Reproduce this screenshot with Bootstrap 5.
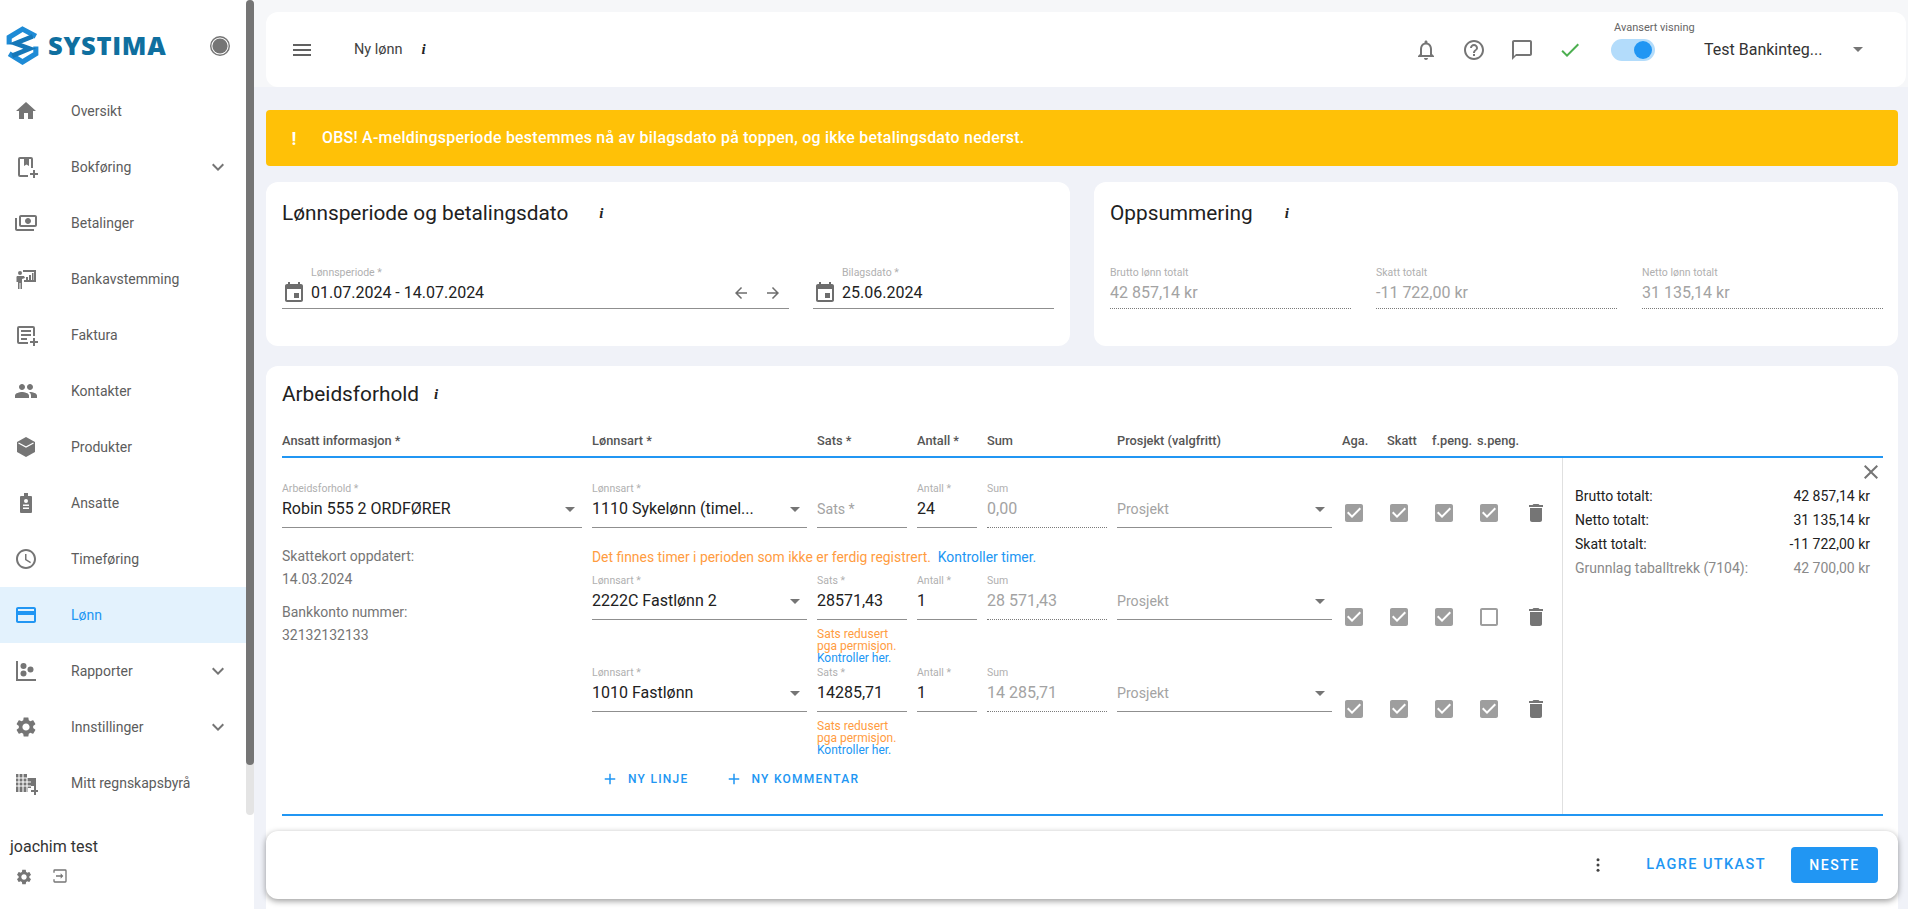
<!doctype html>
<html lang="no">
<head>
<meta charset="utf-8">
<title>Ny lønn</title>
<link href="https://cdn.jsdelivr.net/npm/bootstrap@5.3.0/dist/css/bootstrap.min.css" rel="stylesheet">
<style>
html,body{height:909px;overflow:hidden}
body{background:#f0f2f8;font-family:Roboto,"Liberation Sans",sans-serif;color:#212121;font-size:14px}
svg{fill:currentColor;flex:none;display:block}
.shell{width:1908px;height:909px;position:relative;overflow:hidden}
.side{width:254px;height:909px;background:#fff;position:relative;flex:none}
.sb-track{position:absolute;left:246px;top:0;width:8px;height:815px;background:#e4e4e4;border-radius:8px}
.sb-thumb{position:absolute;left:246px;top:0;width:8px;height:765px;background:#757575;border-radius:8px}
.logo-row{height:83px;padding:8px 0 0 6px;position:relative}
.logo-word{font-family:"Open Sans",sans-serif;font-weight:800;font-size:25.5px;line-height:1;letter-spacing:.7px;color:#0f6f9f;margin-left:9px}
.logo-dot{position:absolute;left:208px;top:34px;color:#757575}
.menu-item{height:56px;width:246px;color:#5c5c5c;padding-left:14px;position:relative}
.menu-item .lbl{margin-left:33px}
.menu-item.on{background:#e3f2fd;color:#2196f3}
.menu-item svg{color:#757575}
.menu-item.on svg{color:#2196f3}
.menu-item .chev{position:absolute;left:206px;top:16px}
.user-name{font-size:16px;color:#333;padding:24px 0 0 10px;line-height:24px}
.user-acts{padding:9px 0 0 15px;gap:19px;color:#757575}
.main-col{width:1654px;flex:none}
.top-wrap{background:#f6f7f9;padding:12px 2px 0 12px}
.top-card{height:75px;background:#fff;border-radius:12px;position:relative}
.menu-ico{margin-left:24px;color:#616161}
.page-name{margin-left:40px;font-size:14.5px;color:#424242}
.info-i{font-family:"Liberation Serif",serif;font-style:italic;font-weight:700;font-size:15px;color:#222;line-height:1}
.page-info{margin-left:19px}
.top-ico{color:#757575}
.adv-lbl{position:absolute;left:1348px;top:10px;font-size:11px;line-height:12px;color:#666}
.adv-track{width:44px;height:22px;border-radius:11px;background:#b3dcfb;position:relative;margin-left:29px;margin-right:49px}
.adv-knob{position:absolute;left:23px;top:2px;width:18px;height:18px;border-radius:50%;background:#2196f3}
.comp-name{font-size:16px;color:#333;width:149px}
.tri{width:0;height:0;border-left:5px solid transparent;border-right:5px solid transparent;border-top:5px solid #757575;flex:none}
.body-wrap{padding:23px 10px 0 12px}
.warn-bar{height:56px;background:#ffc107;border-radius:4px;color:#fff;font-size:15.9px;font-weight:500;letter-spacing:.27px}
.warn-mark{width:56px;text-align:center;font-weight:700;font-size:18px}
.sheet{background:#fff;border-radius:12px}
.top-sheet{width:804px;height:164px;padding:16px}
.sheet-title{font-size:20.8px;line-height:30px;color:#212121;margin:0;font-weight:400}
.fld{height:45px;border-bottom:1px solid #8f8f8f;position:relative;flex:none}
.fld.tight{height:42px}
.fld.dots{border-bottom:1px dotted #7a7a7a}
.fld-lbl{display:block;font-size:10.5px;line-height:12px;color:#b0b0b0;white-space:nowrap}
.fld-val{display:flex;align-items:center;height:28px;font-size:16px;line-height:28px;color:#212121;white-space:nowrap}
.fld-val.mute{color:#a3a3a3}
.fld-val.hint{font-size:14.2px}
.tri-at{position:absolute;right:7px;top:24px}
.fields{padding-top:39px}
.wide-date{width:507px;padding-left:29px}
.short-date{width:241px;padding-left:29px}
.cal{position:absolute;left:0;top:14px;color:#6d6d6d}
.arrows{position:absolute;right:7px;top:17px;gap:10px;color:#6d6d6d}
.sum-fld{width:241px}
.work-sheet{margin-top:20px;height:700px;padding:13px 15px 0 16px}
.head-row{height:45px;gap:10px;margin-top:4px;border-bottom:2px solid #2196f3;padding-top:19px;font-size:12.8px;font-weight:500;color:#555;line-height:18px;width:1601px;white-space:nowrap}
.w-emp{width:300px;flex:none}
.w-art{width:215px;flex:none}
.w-sats{width:90px;flex:none}
.w-ant{width:60px;flex:none}
.w-sum{width:120px;flex:none}
.w-pro{width:215px;flex:none}
.w-ck{width:35px;flex:none}
.grid-body{width:1601px;height:358px;border-bottom:2px solid #2196f3}
.grid-main{width:1280px;flex:none;padding-top:25px;gap:10px}
.emp-info{padding-top:17px;color:#757575;line-height:23px}
.emp-info p{margin:0}
.emp-info .v2{margin-bottom:10px}
.lines{width:970px}
.line-row{gap:10px}
.ck-cell{padding-top:30px;color:#9e9e9e;height:45px}
.up .ck-cell{padding-top:18px}
.trash{color:#757575;padding-left:2px}
.warn-line{height:47px;padding-top:20px;line-height:18px;font-size:13.9px;color:#ff9c3f;white-space:nowrap}
.warn-line a,.note a{color:#2196f3;text-decoration:none}
.note-row{height:47px;padding:8px 0 0 225px;font-size:12px;line-height:12px;color:#ff9c3f}
.add-row{padding:11px 0 0 9px;gap:36px}
.add-btn{color:#2196f3;font-size:12px;font-weight:500;letter-spacing:1.25px;padding:0;border:0;gap:9px;display:flex;align-items:center;text-decoration:none}
.panel{width:321px;border-left:1px solid #e0e0e0;padding:2px 13px 0 12px;font-size:14px;line-height:24px;position:relative}
.panel-x{height:24px;margin-right:-13px;color:#757575}
.panel .mute{color:#8a8a8a}
.foot-bar{position:absolute;left:266px;top:831px;width:1632px;height:68px;background:#fff;border-radius:12px;box-shadow:0 2px 6px rgba(0,0,0,.4);padding-right:20px}
.kebab{color:#424242;margin-right:39px}
.save-btn{color:#2196f3;font-size:14.5px;font-weight:500;letter-spacing:1.4px;padding:0;border:0;margin-right:25px;text-decoration:none}
.next-btn{background:#2196f3;color:#fff;width:87px;height:36px;border-radius:4px;border:0;font-size:14px;font-weight:500;letter-spacing:1.5px;padding:0}
</style>
</head>
<body>
<svg width="0" height="0" style="position:absolute">
<defs>
<symbol id="i-ck" viewBox="0 0 24 24"><path d="M19 3H5c-1.11 0-2 .9-2 2v14c0 1.1.89 2 2 2h14c1.11 0 2-.9 2-2V5c0-1.1-.89-2-2-2zm-9 14l-5-5 1.41-1.41L10 14.17l7.59-7.59L19 8l-9 9z"/></symbol>
<symbol id="i-un" viewBox="0 0 24 24"><path d="M19 5v14H5V5h14m0-2H5c-1.1 0-2 .9-2 2v14c0 1.1.9 2 2 2h14c1.1 0 2-.9 2-2V5c0-1.1-.9-2-2-2z"/></symbol>
<symbol id="i-del" viewBox="0 0 24 24"><path d="M6 19c0 1.1.9 2 2 2h8c1.1 0 2-.9 2-2V7H6v12zM19 4h-3.5l-1-1h-5l-1 1H5v2h14V4z"/></symbol>
<symbol id="i-chev" viewBox="0 0 24 24"><path d="M16.59 8.59L12 13.17 7.41 8.59 6 10l6 6 6-6z"/></symbol>
<symbol id="i-gear" viewBox="0 0 24 24"><path d="M19.14 12.94c.04-.3.06-.61.06-.94 0-.32-.02-.64-.07-.94l2.03-1.58c.18-.14.23-.41.12-.61l-1.92-3.32c-.12-.22-.37-.29-.59-.22l-2.39.96c-.5-.38-1.03-.7-1.62-.94l-.36-2.54c-.04-.24-.24-.41-.48-.41h-3.84c-.24 0-.43.17-.47.41l-.36 2.54c-.59.24-1.13.57-1.62.94l-2.39-.96c-.22-.08-.47 0-.59.22L2.74 8.87c-.12.21-.08.47.12.61l2.03 1.58c-.05.3-.09.63-.09.94s.02.64.07.94l-2.03 1.58c-.18.14-.23.41-.12.61l1.92 3.32c.12.22.37.29.59.22l2.39-.96c.5.38 1.03.7 1.62.94l.36 2.54c.05.24.24.41.48.41h3.84c.24 0 .44-.17.47-.41l.36-2.54c.59-.24 1.13-.56 1.62-.94l2.39.96c.22.08.47 0 .59-.22l1.92-3.32c.12-.22.07-.47-.12-.61l-2.01-1.58zM12 15.6c-1.98 0-3.6-1.62-3.6-3.6s1.62-3.6 3.6-3.6 3.6 1.62 3.6 3.6-1.62 3.6-3.6 3.6z"/></symbol>
<symbol id="i-cal" viewBox="0 0 24 24"><path d="M17 12h-5v5h5v-5zM16 1v2H8V1H6v2H5c-1.11 0-1.99.9-1.99 2L3 19c0 1.1.89 2 2 2h14c1.1 0 2-.9 2-2V5c0-1.1-.9-2-2-2h-1V1h-2zm3 18H5V8h14v11z"/></symbol>
<symbol id="i-plus" viewBox="0 0 24 24"><path d="M19 13h-6v6h-2v-6H5v-2h6V5h2v6h6v2z"/></symbol>
</defs>
</svg>

<div class="shell d-flex">
  <aside class="side">
    <div class="logo-row d-flex align-items-center">
      <svg width="33" height="41" viewBox="0 0 32 40" style="fill:none"><path d="M3 19v-7L16 4l13 7" stroke="#1e8bd6" stroke-width="5"/><path d="M29 21v7l-13 8-13-8" stroke="#1e8bd6" stroke-width="5"/><path d="M26 11 9 18l14 5-17 7" stroke="#1577b8" stroke-width="4.5"/></svg>
      <span class="logo-word">SYSTIMA</span>
      <svg class="logo-dot" width="24" height="24" viewBox="0 0 24 24"><path d="M12 2a10 10 0 1 0 0 20 10 10 0 0 0 0-20zm0 18.6a8.6 8.6 0 1 1 0-17.2 8.6 8.6 0 0 1 0 17.2z"/><circle cx="12" cy="12" r="7.6"/></svg>
    </div>
    <div class="d-flex flex-column">
      <div class="menu-item d-flex align-items-center"><svg width="24" height="24" viewBox="0 0 24 24"><path d="M10 20v-6h4v6h5v-8h3L12 3 2 12h3v8z"/></svg><span class="lbl">Oversikt</span></div>
      <div class="menu-item d-flex align-items-center"><svg width="24" height="24" viewBox="0 0 24 24"><path d="M6 2h11a2 2 0 0 1 2 2v9h-2V4h-2v7l-2.500-1.500L10 11V4H6v16h8v2H6a2 2 0 0 1-2-2V4a2 2 0 0 1 2-2zM19 15h2v3h3v2h-3v3h-2v-3h-3v-2h3z"/></svg><span class="lbl">Bokføring</span><svg class="chev" width="24" height="24"><use href="#i-chev"/></svg></div>
      <div class="menu-item d-flex align-items-center"><svg width="24" height="24" viewBox="0 0 24 24"><g transform="matrix(-1 0 0 1 24 0)"><path d="M19 14V6c0-1.100-.9-2-2-2H3c-1.100 0-2 .9-2 2v8c0 1.100.9 2 2 2h14c1.100 0 2-.9 2-2zm-2 0H3V6h14v8zm-7-7c-1.660 0-3 1.340-3 3s1.340 3 3 3 3-1.340 3-3-1.340-3-3-3zm13 0v11c0 1.100-.9 2-2 2H4v-2h17V7h2z"/></g></svg><span class="lbl">Betalinger</span></div>
      <div class="menu-item d-flex align-items-center"><svg width="24" height="24" viewBox="0 0 24 24"><circle cx="6" cy="6" r="2"/><path d="M3 9h7l1 2-3 1v10H6.500v-6h-1v6H4v-7H2.500v-4a2 2 0 0 1 .5-2zM9 3h13v12H10v-2h10V5H9zM12 10h2v3h-2zM15 8h2v5h-2zM18 6h1.500v7H18z"/></svg><span class="lbl">Bankavstemming</span></div>
      <div class="menu-item d-flex align-items-center"><svg width="24" height="24" viewBox="0 0 24 24"><path d="M5 3h14a2 2 0 0 1 2 2v8h-2V5H5v14h9v2H5a2 2 0 0 1-2-2V5a2 2 0 0 1 2-2zM7 7h10v2H7zM7 11h10v2H7zM7 15h6v2H7zM19 15h2v3h3v2h-3v3h-2v-3h-3v-2h3z"/></svg><span class="lbl">Faktura</span></div>
      <div class="menu-item d-flex align-items-center"><svg width="24" height="24" viewBox="0 0 24 24"><path d="M16 11c1.660 0 2.990-1.340 2.990-3S17.660 5 16 5c-1.660 0-3 1.340-3 3s1.340 3 3 3zm-8 0c1.660 0 2.990-1.340 2.990-3S9.660 5 8 5C6.340 5 5 6.340 5 8s1.340 3 3 3zm0 2c-2.330 0-7 1.170-7 3.500V19h14v-2.500c0-2.330-4.670-3.500-7-3.500zm8 0c-.29 0-.62.02-.97.05 1.160.84 1.970 1.970 1.970 3.450V19h6v-2.500c0-2.330-4.670-3.500-7-3.500z"/></svg><span class="lbl">Kontakter</span></div>
      <div class="menu-item d-flex align-items-center"><svg width="24" height="24" viewBox="0 0 24 24"><path d="M12 2 3 7v10l9 5 9-5V7z"/><path d="M4.500 8 12 12l7.500-4" style="fill:none;stroke:#fff;stroke-width:1.300"/></svg><span class="lbl">Produkter</span></div>
      <div class="menu-item d-flex align-items-center"><svg width="24" height="24" viewBox="0 0 24 24"><path d="M10 2h4v3h3a1 1 0 0 1 1 1v15a1 1 0 0 1-1 1H7a1 1 0 0 1-1-1V6a1 1 0 0 1 1-1h3z"/><circle cx="12" cy="10" r="2" fill="#fff"/><path d="M9 13.500h6V15H9zM9 16.500h6V18H9z" fill="#fff"/></svg><span class="lbl">Ansatte</span></div>
      <div class="menu-item d-flex align-items-center"><svg width="24" height="24" viewBox="0 0 24 24"><path d="M11.990 2C6.470 2 2 6.480 2 12s4.470 10 9.990 10C17.520 22 22 17.520 22 12S17.520 2 11.990 2zM12 20c-4.420 0-8-3.580-8-8s3.580-8 8-8 8 3.580 8 8-3.580 8-8 8zm.5-13H11v6l5.250 3.150.75-1.230-4.500-2.670z"/></svg><span class="lbl">Timeføring</span></div>
      <div class="menu-item on d-flex align-items-center"><svg width="24" height="24" viewBox="0 0 24 24"><path d="M20 4H4c-1.110 0-1.990.89-1.990 2L2 18c0 1.110.89 2 2 2h16c1.110 0 2-.89 2-2V6c0-1.110-.89-2-2-2zm0 14H4v-6h16v6zm0-10H4V6h16v2z"/></svg><span class="lbl">Lønn</span></div>
      <div class="menu-item d-flex align-items-center"><svg width="24" height="24" viewBox="0 0 24 24"><path d="M2 2h2v18h18v2H2z"/><circle cx="9.500" cy="7" r="3"/><circle cx="16.500" cy="10.500" r="3"/><circle cx="9.500" cy="14.500" r="3"/></svg><span class="lbl">Rapporter</span><svg class="chev" width="24" height="24"><use href="#i-chev"/></svg></div>
      <div class="menu-item d-flex align-items-center"><svg width="24" height="24"><use href="#i-gear"/></svg><span class="lbl">Innstillinger</span><svg class="chev" width="24" height="24"><use href="#i-chev"/></svg></div>
      <div class="menu-item d-flex align-items-center"><svg width="24" height="24" viewBox="0 0 24 24"><path d="M2 3h11v4h9v8h-5v2h-3v4H2z"/><path d="M5 3v18M9 3v18M13 7v14M2 7h11M2 11h15M2 15h15" style="fill:none;stroke:#fff;stroke-width:1.100"/><path d="M20 15h2v4h2v2h-2v3h-2v-3h-3v-2h3z"/></svg><span class="lbl">Mitt regnskapsbyrå</span></div>
    </div>
    <div class="user-name">joachim test</div>
    <div class="user-acts d-flex">
      <svg width="18" height="18"><use href="#i-gear"/></svg>
      <svg width="16" height="16" viewBox="0 0 24 24"><path d="M4 2h16a2 2 0 0 1 2 2v16a2 2 0 0 1-2 2H4a2 2 0 0 1-2-2v-3h2v3h16V4H4v3H2V4a2 2 0 0 1 2-2zM6 11h7V8l4 4-4 4v-3H6z"/></svg>
    </div>
    <div class="sb-track"></div>
    <div class="sb-thumb"></div>
  </aside>

  <div class="main-col">
    <div class="top-wrap">
      <div class="top-card d-flex align-items-center">
        <svg class="menu-ico" width="24" height="24" viewBox="0 0 24 24"><path d="M3 18h18v-2H3v2zm0-5h18v-2H3v2zm0-7v2h18V6H3z"/></svg>
        <span class="page-name">Ny lønn</span>
        <span class="info-i page-info">i</span>
        <div class="ms-auto d-flex align-items-center">
          <svg class="top-ico" width="24" height="24" viewBox="0 0 24 24"><path d="M12 22c1.100 0 2-.9 2-2h-4c0 1.100.9 2 2 2zm6-6v-5c0-3.070-1.640-5.640-4.500-6.320V4c0-.83-.67-1.500-1.500-1.500s-1.500.67-1.500 1.500v.68C7.630 5.360 6 7.920 6 11v5l-2 2v1h16v-1l-2-2zm-2 1H8v-6c0-2.480 1.510-4.500 4-4.500s4 2.020 4 4.500v6z"/></svg>
          <svg class="top-ico" style="margin-left:24px" width="24" height="24" viewBox="0 0 24 24"><path d="M11 18h2v-2h-2v2zm1-16C6.480 2 2 6.480 2 12s4.480 10 10 10 10-4.480 10-10S17.520 2 12 2zm0 18c-4.410 0-8-3.590-8-8s3.590-8 8-8 8 3.590 8 8-3.590 8-8 8zm0-14c-2.210 0-4 1.790-4 4h2c0-1.100.9-2 2-2s2 .9 2 2c0 2-3 1.750-3 5h2c0-2.250 3-2.500 3-5 0-2.210-1.790-4-4-4z"/></svg>
          <svg class="top-ico" style="margin-left:24px" width="24" height="24" viewBox="0 0 24 24"><path d="M20 2H4c-1.100 0-2 .9-2 2v18l4-4h14c1.100 0 2-.9 2-2V4c0-1.100-.9-2-2-2zm0 14H6l-2 2V4h16v12z"/></svg>
          <svg style="margin-left:24px;color:#4caf50" width="24" height="24" viewBox="0 0 24 24"><path d="M9 16.170L4.830 12l-1.420 1.410L9 19 21 7l-1.410-1.410z"/></svg>
          <div class="adv-track"><div class="adv-knob"></div></div>
          <span class="comp-name">Test Bankinteg...</span>
          <span class="tri" style="margin-right:43px"></span>
        </div>
        <span class="adv-lbl">Avansert visning</span>
      </div>
    </div>

    <div class="body-wrap">
      <div class="warn-bar d-flex align-items-center">
        <span class="warn-mark">!</span>
        <span>OBS! A-meldingsperiode bestemmes nå av bilagsdato på toppen, og ikke betalingsdato nederst.</span>
      </div>

      <div class="d-flex justify-content-between mt-3">
        <section class="sheet top-sheet">
          <div class="d-flex align-items-center"><h2 class="sheet-title">Lønnsperiode og betalingsdato</h2><span class="info-i" style="margin-left:31px">i</span></div>
          <div class="fields d-flex" style="gap:24px">
            <div class="fld tight wide-date">
              <svg class="cal" width="24" height="24"><use href="#i-cal"/></svg>
              <span class="fld-lbl">Lønnsperiode *</span><span class="fld-val">01.07.2024 - 14.07.2024</span>
              <div class="arrows d-flex"><svg width="18" height="18" viewBox="0 0 24 24"><path d="M20 11H7.830l5.590-5.590L12 4l-8 8 8 8 1.410-1.410L7.830 13H20v-2z"/></svg><svg width="18" height="18" viewBox="0 0 24 24" style="margin-left:4px"><path d="M12 4l-1.410 1.410L16.170 11H4v2h12.170l-5.580 5.590L12 20l8-8z"/></svg></div>
            </div>
            <div class="fld tight short-date">
              <svg class="cal" width="24" height="24"><use href="#i-cal"/></svg>
              <span class="fld-lbl">Bilagsdato *</span><span class="fld-val">25.06.2024</span>
            </div>
          </div>
        </section>
        <section class="sheet top-sheet">
          <div class="d-flex align-items-center"><h2 class="sheet-title">Oppsummering</h2><span class="info-i" style="margin-left:32px">i</span></div>
          <div class="fields d-flex" style="gap:25px">
            <div class="fld tight dots sum-fld"><span class="fld-lbl">Brutto lønn totalt</span><span class="fld-val mute">42 857,14 kr</span></div>
            <div class="fld tight dots sum-fld"><span class="fld-lbl">Skatt totalt</span><span class="fld-val mute">-11 722,00 kr</span></div>
            <div class="fld tight dots sum-fld"><span class="fld-lbl">Netto lønn totalt</span><span class="fld-val mute">31 135,14 kr</span></div>
          </div>
        </section>
      </div>

      <section class="sheet work-sheet">
        <div class="d-flex align-items-center"><h2 class="sheet-title">Arbeidsforhold</h2><span class="info-i" style="margin-left:15px">i</span></div>
        <div class="head-row d-flex">
          <div class="w-emp">Ansatt informasjon *</div><div class="w-art">Lønnsart *</div><div class="w-sats">Sats *</div><div class="w-ant">Antall *</div><div class="w-sum">Sum</div><div class="w-pro">Prosjekt (valgfritt)</div><div class="w-ck">Aga.</div><div class="w-ck">Skatt</div><div class="w-ck">f.peng.</div><div class="w-ck">s.peng.</div>
        </div>
        <div class="grid-body d-flex">
          <div class="grid-main d-flex">
            <div class="w-emp">
              <div class="fld"><span class="fld-lbl">Arbeidsforhold *</span><span class="fld-val">Robin 555 2 ORDFØRER</span><span class="tri tri-at"></span></div>
              <div class="emp-info">
                <p>Skattekort oppdatert:</p><p class="v2">14.03.2024</p>
                <p>Bankkonto nummer:</p><p>32132132133</p>
              </div>
            </div>
            <div class="lines">
              <div class="line-row up d-flex">
                <div class="fld w-art"><span class="fld-lbl">Lønnsart *</span><span class="fld-val">1110 Sykelønn (timel...</span><span class="tri tri-at"></span></div>
                <div class="fld w-sats"><span class="fld-lbl">&nbsp;</span><span class="fld-val mute hint">Sats *</span></div>
                <div class="fld w-ant"><span class="fld-lbl">Antall *</span><span class="fld-val">24</span></div>
                <div class="fld dots w-sum"><span class="fld-lbl">Sum</span><span class="fld-val mute">0,00</span></div>
                <div class="fld w-pro"><span class="fld-lbl">&nbsp;</span><span class="fld-val mute hint">Prosjekt</span><span class="tri tri-at"></span></div>
                <div class="w-ck ck-cell"><svg width="24" height="24"><use href="#i-ck"/></svg></div>
                <div class="w-ck ck-cell"><svg width="24" height="24"><use href="#i-ck"/></svg></div>
                <div class="w-ck ck-cell"><svg width="24" height="24"><use href="#i-ck"/></svg></div>
                <div class="w-ck ck-cell"><svg width="24" height="24"><use href="#i-ck"/></svg></div>
                <div class="w-ck ck-cell trash"><svg width="24" height="24"><use href="#i-del"/></svg></div>
              </div>
              <div class="warn-line">Det finnes timer i perioden som ikke er ferdig registrert. &nbsp;<a href="#">Kontroller timer.</a></div>
              <div class="line-row d-flex">
                <div class="fld w-art"><span class="fld-lbl">Lønnsart *</span><span class="fld-val">2222C Fastlønn 2</span><span class="tri tri-at"></span></div>
                <div class="fld w-sats"><span class="fld-lbl">Sats *</span><span class="fld-val">28571,43</span></div>
                <div class="fld w-ant"><span class="fld-lbl">Antall *</span><span class="fld-val">1</span></div>
                <div class="fld dots w-sum"><span class="fld-lbl">Sum</span><span class="fld-val mute">28 571,43</span></div>
                <div class="fld w-pro"><span class="fld-lbl">&nbsp;</span><span class="fld-val mute hint">Prosjekt</span><span class="tri tri-at"></span></div>
                <div class="w-ck ck-cell"><svg width="24" height="24"><use href="#i-ck"/></svg></div>
                <div class="w-ck ck-cell"><svg width="24" height="24"><use href="#i-ck"/></svg></div>
                <div class="w-ck ck-cell"><svg width="24" height="24"><use href="#i-ck"/></svg></div>
                <div class="w-ck ck-cell"><svg width="24" height="24"><use href="#i-un"/></svg></div>
                <div class="w-ck ck-cell trash"><svg width="24" height="24"><use href="#i-del"/></svg></div>
              </div>
              <div class="note-row note">Sats redusert<br>pga permisjon.<br><a href="#">Kontroller her.</a></div>
              <div class="line-row d-flex">
                <div class="fld w-art"><span class="fld-lbl">Lønnsart *</span><span class="fld-val">1010 Fastlønn</span><span class="tri tri-at"></span></div>
                <div class="fld w-sats"><span class="fld-lbl">Sats *</span><span class="fld-val">14285,71</span></div>
                <div class="fld w-ant"><span class="fld-lbl">Antall *</span><span class="fld-val">1</span></div>
                <div class="fld dots w-sum"><span class="fld-lbl">Sum</span><span class="fld-val mute">14 285,71</span></div>
                <div class="fld w-pro"><span class="fld-lbl">&nbsp;</span><span class="fld-val mute hint">Prosjekt</span><span class="tri tri-at"></span></div>
                <div class="w-ck ck-cell"><svg width="24" height="24"><use href="#i-ck"/></svg></div>
                <div class="w-ck ck-cell"><svg width="24" height="24"><use href="#i-ck"/></svg></div>
                <div class="w-ck ck-cell"><svg width="24" height="24"><use href="#i-ck"/></svg></div>
                <div class="w-ck ck-cell"><svg width="24" height="24"><use href="#i-ck"/></svg></div>
                <div class="w-ck ck-cell trash"><svg width="24" height="24"><use href="#i-del"/></svg></div>
              </div>
              <div class="note-row note">Sats redusert<br>pga permisjon.<br><a href="#">Kontroller her.</a></div>
              <div class="add-row d-flex">
                <button type="button" class="btn add-btn"><svg width="18" height="18"><use href="#i-plus"/></svg>NY LINJE</button>
                <button type="button" class="btn add-btn"><svg width="18" height="18"><use href="#i-plus"/></svg>NY KOMMENTAR</button>
              </div>
            </div>
          </div>
          <div class="panel">
            <div class="panel-x d-flex justify-content-end"><svg width="24" height="24" viewBox="0 0 24 24"><path d="M19 6.410L17.590 5 12 10.590 6.410 5 5 6.410 10.590 12 5 17.590 6.410 19 12 13.410 17.590 19 19 17.590 13.410 12z"/></svg></div>
            <div class="d-flex justify-content-between"><span>Brutto totalt:</span><span>42 857,14 kr</span></div>
            <div class="d-flex justify-content-between"><span>Netto totalt:</span><span>31 135,14 kr</span></div>
            <div class="d-flex justify-content-between"><span>Skatt totalt:</span><span>-11 722,00 kr</span></div>
            <div class="d-flex justify-content-between mute"><span>Grunnlag taballtrekk (7104):</span><span>42 700,00 kr</span></div>
          </div>
        </div>
      </section>
    </div>
  </div>

  <div class="foot-bar d-flex align-items-center justify-content-end">
    <svg class="kebab" width="18" height="18" viewBox="0 0 24 24"><circle cx="12" cy="5" r="2"/><circle cx="12" cy="12" r="2"/><circle cx="12" cy="19" r="2"/></svg>
    <button type="button" class="btn save-btn">LAGRE UTKAST</button>
    <button type="button" class="btn next-btn">NESTE</button>
  </div>
</div>
<script src="https://cdn.jsdelivr.net/npm/bootstrap@5.3.0/dist/js/bootstrap.bundle.min.js"></script>
</body>
</html>
